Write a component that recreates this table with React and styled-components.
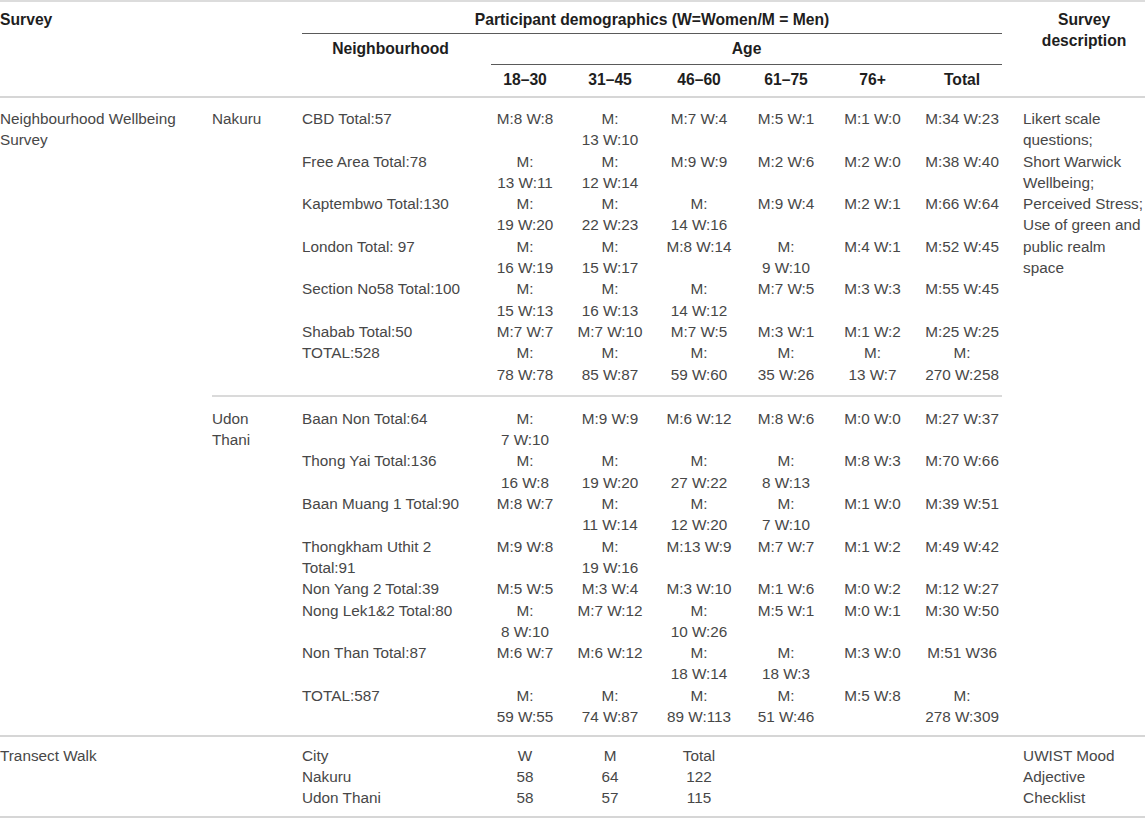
import React from 'react'
import styled, {createGlobalStyle} from 'styled-components'

const GlobalStyle = createGlobalStyle`
    body {
        margin: 0;
        background: #ffffff;
        font-family: "Liberation Sans", Arial, sans-serif;
    }
`

// column widths, left to right (sum = 1145)
const widths = [206, 90, 189, 80, 90, 88, 86, 87, 92, 137]

const nakuru = [
    ['CBD Total:57', 'M:8 W:8', 'M:\n13 W:10', 'M:7 W:4', 'M:5 W:1', 'M:1 W:0', 'M:34 W:23'],
    ['Free Area Total:78', 'M:\n13 W:11', 'M:\n12 W:14', 'M:9 W:9', 'M:2 W:6', 'M:2 W:0', 'M:38 W:40'],
    ['Kaptembwo Total:130', 'M:\n19 W:20', 'M:\n22 W:23', 'M:\n14 W:16', 'M:9 W:4', 'M:2 W:1', 'M:66 W:64'],
    ['London Total: 97', 'M:\n16 W:19', 'M:\n15 W:17', 'M:8 W:14', 'M:\n9 W:10', 'M:4 W:1', 'M:52 W:45'],
    ['Section No58 Total:100', 'M:\n15 W:13', 'M:\n16 W:13', 'M:\n14 W:12', 'M:7 W:5', 'M:3 W:3', 'M:55 W:45'],
    ['Shabab Total:50', 'M:7 W:7', 'M:7 W:10', 'M:7 W:5', 'M:3 W:1', 'M:1 W:2', 'M:25 W:25'],
    ['TOTAL:528', 'M:\n78 W:78', 'M:\n85 W:87', 'M:\n59 W:60', 'M:\n35 W:26', 'M:\n13 W:7', 'M:\n270 W:258'],
]

const udon = [
    ['Baan Non Total:64', 'M:\n7 W:10', 'M:9 W:9', 'M:6 W:12', 'M:8 W:6', 'M:0 W:0', 'M:27 W:37'],
    ['Thong Yai Total:136', 'M:\n16 W:8', 'M:\n19 W:20', 'M:\n27 W:22', 'M:\n8 W:13', 'M:8 W:3', 'M:70 W:66'],
    ['Baan Muang 1 Total:90', 'M:8 W:7', 'M:\n11 W:14', 'M:\n12 W:20', 'M:\n7 W:10', 'M:1 W:0', 'M:39 W:51'],
    ['Thongkham Uthit 2\nTotal:91', 'M:9 W:8', 'M:\n19 W:16', 'M:13 W:9', 'M:7 W:7', 'M:1 W:2', 'M:49 W:42'],
    ['Non Yang 2 Total:39', 'M:5 W:5', 'M:3 W:4', 'M:3 W:10', 'M:1 W:6', 'M:0 W:2', 'M:12 W:27'],
    ['Nong Lek1&2 Total:80', 'M:\n8 W:10', 'M:7 W:12', 'M:\n10 W:26', 'M:5 W:1', 'M:0 W:1', 'M:30 W:50'],
    ['Non Than Total:87', 'M:6 W:7', 'M:6 W:12', 'M:\n18 W:14', 'M:\n18 W:3', 'M:3 W:0', 'M:51 W36'],
    ['TOTAL:587', 'M:\n59 W:55', 'M:\n74 W:87', 'M:\n89 W:113', 'M:\n51 W:46', 'M:5 W:8', 'M:\n278 W:309'],
]

const transect = [
    ['City', 'W', 'M', 'Total'],
    ['Nakuru', '58', '64', '122'],
    ['Udon Thani', '58', '57', '115'],
]

const ROWS_NEIGHBOURHOOD = nakuru.length + 1 + udon.length

function App() {
    return (
        <>
            <GlobalStyle />
            <Table>
                <colgroup>
                    {widths.map((w, i) => <col key={i} style={{width: w}} />)}
                </colgroup>
                <Head>
                    <tr>
                        <Th colSpan={2} rowSpan={3} align="left" top={7} first>Survey</Th>
                        <Th colSpan={7} top={7}>
                            <Spanner gap={3}>Participant demographics (W=Women/M = Men)</Spanner>
                        </Th>
                        <Th rowSpan={3} top={7} last>{'Survey\ndescription'}</Th>
                    </tr>
                    <tr>
                        <Th rowSpan={2} top={4}>Neighbourhood</Th>
                        <Th colSpan={6} top={4}>
                            <Spanner gap={4}>Age</Spanner>
                        </Th>
                    </tr>
                    <tr>
                        {['18–30', '31–45', '46–60', '61–75', '76+', 'Total'].map((t) => (
                            <Th key={t} top={4.5} bottom={6}>{t}</Th>
                        ))}
                    </tr>
                </Head>

                <Section>
                    {nakuru.map((row, i) => (
                        <tr key={'n' + i}>
                            {i === 0 && (
                                <Td rowSpan={ROWS_NEIGHBOURHOOD} top={9.6} first>
                                    {'Neighbourhood Wellbeing\nSurvey'}
                                </Td>
                            )}
                            {i === 0 && <Td rowSpan={nakuru.length} top={9.6}>Nakuru</Td>}
                            {row.map((v, j) => (
                                <Td key={j} top={i === 0 ? 9.6 : 0} center={j > 0}>{v}</Td>
                            ))}
                            {i === 0 && (
                                <Td rowSpan={ROWS_NEIGHBOURHOOD} top={9.6} last>
                                    {'Likert scale\nquestions;\nShort Warwick\nWellbeing;\nPerceived Stress;\nUse of green and\npublic realm\nspace'}
                                </Td>
                            )}
                        </tr>
                    ))}
                    <tr>
                        <RuleCell colSpan={8}><Rule /></RuleCell>
                    </tr>
                    {udon.map((row, i) => (
                        <tr key={'u' + i}>
                            {i === 0 && <Td rowSpan={udon.length}>{'Udon\nThani'}</Td>}
                            {row.map((v, j) => (
                                <Td key={j} center={j > 0} bottom={i === udon.length - 1 ? 8 : 0}>{v}</Td>
                            ))}
                        </tr>
                    ))}
                </Section>

                <Section>
                    {transect.map((row, i) => (
                        <tr key={'t' + i}>
                            {i === 0 && <Td rowSpan={3} top={7.5} first>Transect Walk</Td>}
                            {i === 0 && <Td rowSpan={3} top={7.5}></Td>}
                            {row.map((v, j) => (
                                <Td key={j} center={j > 0} top={i === 0 ? 7.5 : 0} bottom={i === 2 ? 7 : 0}>{v}</Td>
                            ))}
                            {i === 0 && <Td rowSpan={3} colSpan={3} top={7.5}></Td>}
                            {i === 0 && (
                                <Td rowSpan={3} top={7.5} last>{'UWIST Mood\nAdjective\nChecklist'}</Td>
                            )}
                        </tr>
                    ))}
                </Section>
            </Table>
        </>
    )
}

export default App

const Table = styled.table`
    width: 1145px;
    table-layout: fixed;
    border-collapse: collapse;
    border-top: 2px solid #dcdcdc;
    font-size: 15.3px;
    line-height: 21.3px;
`

const Head = styled.thead`
    border-bottom: 2px solid #d6d6d6;
`

const Section = styled.tbody`
    border-bottom: 2px solid #d6d6d6;
`

const Th = styled.th`
    padding: ${(p) => p.top || 0}px 6px ${(p) => p.bottom || 0}px;
    padding-left: ${(p) => (p.first ? 0 : p.last ? 15 : 6)}px;
    padding-right: ${(p) => (p.last ? 0 : 6)}px;
    vertical-align: top;
    text-align: ${(p) => p.align || 'center'};
    font-size: 15.7px;
    font-weight: 700;
    color: #1e1e1e;
    white-space: pre;
`

// label with a thin rule below it, spanning the grouped columns
const Spanner = styled.div`
    padding-bottom: ${(p) => p.gap}px;
    border-bottom: 1px solid #5a5a5a;
`

const Td = styled.td`
    padding: ${(p) => p.top || 0}px 6px ${(p) => p.bottom || 0}px;
    padding-left: ${(p) => (p.first ? 0 : p.last ? 15 : 6)}px;
    padding-right: ${(p) => (p.last ? 0 : 6)}px;
    vertical-align: top;
    text-align: ${(p) => (p.center ? 'center' : 'left')};
    color: #474747;
    white-space: pre;
`

const RuleCell = styled.td`
    padding: 9.7px 6px 11.3px;
`

const Rule = styled.div`
    border-top: 2px solid #dadada;
`
